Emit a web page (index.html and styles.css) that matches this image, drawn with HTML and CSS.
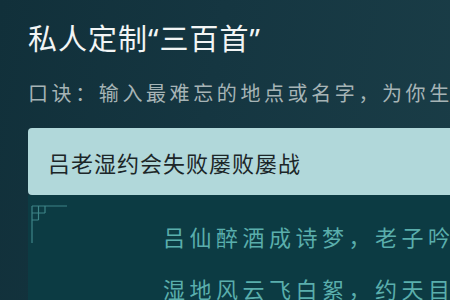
FILE: index.html
```html
<!DOCTYPE html>
<html lang="zh-CN">
<head>
<meta charset="utf-8">
<title>私人定制三百首</title>
<link rel="stylesheet" href="styles.css">
</head>
<body>
<div class="page">
  <h1 class="title">私人定制<span class="q">“</span>三百首<span class="q">”</span></h1>
  <p class="hint">口诀：输入最难忘的地点或名字，为你生成</p>
  <div class="input">吕老湿约会失败屡败屡战</div>
  <div class="panel">
    <svg class="corner" width="40" height="42" viewBox="0 0 40 42" aria-hidden="true">
      <g fill="none" stroke="#4f9ea0" stroke-width="1.2" opacity="0.75">
        <path d="M1 1H36"/>
        <path d="M1 1V38"/>
        <path d="M7.5 1V15M14 1V8M1 8H14M1 15H7.5"/>
      </g>
    </svg>
    <div class="poem">
      <p class="line">吕仙醉酒成诗梦，老子吟</p>
      <p class="line">湿地风云飞白絮，约天目</p>
    </div>
  </div>
</div>
</body>
</html>
```
FILE: styles.css
```css
html, body {
  margin: 0;
  padding: 0;
  width: 450px;
  height: 300px;
  overflow: hidden;
}
body {
  background: linear-gradient(100deg, #11303a 0%, #153641 45%, #1a3d47 100%);
  font-family: "Noto Sans", "Noto Sans CJK SC", sans-serif;
}
.page {
  padding: 24px 0 0 28px;
  white-space: nowrap;
}
.title {
  margin: 0;
  font-size: 29px;
  line-height: 29px;
  font-weight: 400;
  letter-spacing: 1px;
  color: #f2f5f5;
}
.hint {
  margin: 31px 0 0 0;
  font-size: 20px;
  line-height: 20px;
  letter-spacing: 3.6px;
  color: #a6b4b6;
}
.input {
  margin-top: 24px;
  height: 67px;
  display: flex;
  align-items: center;
  padding-left: 20px;
  background: #b1d8da;
  border-radius: 4px 0 0 4px;
  font-size: 22px;
  letter-spacing: 1px;
  color: #1c2628;
}
.panel {
  position: relative;
  background: #0c3b43;
  height: 89px;
  padding: 16px 0 0 135px;
}
.corner {
  position: absolute;
  left: 3px;
  top: 10px;
}
.poem {
  color: #5aaeac;
  font-size: 22px;
  letter-spacing: 4.5px;
}
.line {
  margin: 0;
  line-height: 52px;
}
```
